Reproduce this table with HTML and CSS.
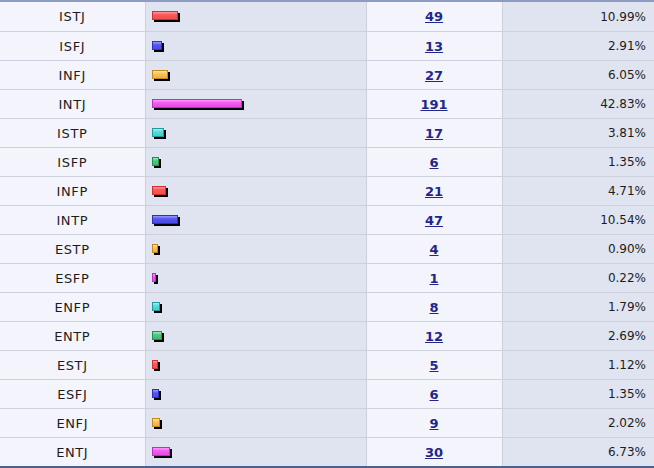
FILE: index.html
```html
<!DOCTYPE html>
<html lang="en">
<head>
  <meta charset="UTF-8">
  <title>MBTI</title>
  <link rel="stylesheet" href="styles.css">
</head>
<body>

<table id="stats">
  <colgroup>
    <col class="c-type">
    <col class="c-graph">
    <col class="c-count">
    <col class="c-pct">
  </colgroup>
  <tr><td class="type">ISTJ</td><td class="graph"><span class="bar red" style="width:26px"></span></td><td class="count"><a href="#">49</a></td><td class="pct">10.99%</td></tr>
  <tr><td class="type">ISFJ</td><td class="graph"><span class="bar blue" style="width:10px"></span></td><td class="count"><a href="#">13</a></td><td class="pct">2.91%</td></tr>
  <tr><td class="type">INFJ</td><td class="graph"><span class="bar orange" style="width:16px"></span></td><td class="count"><a href="#">27</a></td><td class="pct">6.05%</td></tr>
  <tr><td class="type">INTJ</td><td class="graph"><span class="bar pink" style="width:90px"></span></td><td class="count"><a href="#">191</a></td><td class="pct">42.83%</td></tr>
  <tr><td class="type">ISTP</td><td class="graph"><span class="bar cyan" style="width:12px"></span></td><td class="count"><a href="#">17</a></td><td class="pct">3.81%</td></tr>
  <tr><td class="type">ISFP</td><td class="graph"><span class="bar green" style="width:7px"></span></td><td class="count"><a href="#">6</a></td><td class="pct">1.35%</td></tr>
  <tr><td class="type">INFP</td><td class="graph"><span class="bar red" style="width:14px"></span></td><td class="count"><a href="#">21</a></td><td class="pct">4.71%</td></tr>
  <tr><td class="type">INTP</td><td class="graph"><span class="bar blue" style="width:26px"></span></td><td class="count"><a href="#">47</a></td><td class="pct">10.54%</td></tr>
  <tr><td class="type">ESTP</td><td class="graph"><span class="bar orange" style="width:6px"></span></td><td class="count"><a href="#">4</a></td><td class="pct">0.90%</td></tr>
  <tr><td class="type">ESFP</td><td class="graph"><span class="bar pink" style="width:4px"></span></td><td class="count"><a href="#">1</a></td><td class="pct">0.22%</td></tr>
  <tr><td class="type">ENFP</td><td class="graph"><span class="bar cyan" style="width:8px"></span></td><td class="count"><a href="#">8</a></td><td class="pct">1.79%</td></tr>
  <tr><td class="type">ENTP</td><td class="graph"><span class="bar green" style="width:10px"></span></td><td class="count"><a href="#">12</a></td><td class="pct">2.69%</td></tr>
  <tr><td class="type">ESTJ</td><td class="graph"><span class="bar red" style="width:6px"></span></td><td class="count"><a href="#">5</a></td><td class="pct">1.12%</td></tr>
  <tr><td class="type">ESFJ</td><td class="graph"><span class="bar blue" style="width:7px"></span></td><td class="count"><a href="#">6</a></td><td class="pct">1.35%</td></tr>
  <tr><td class="type">ENFJ</td><td class="graph"><span class="bar orange" style="width:8px"></span></td><td class="count"><a href="#">9</a></td><td class="pct">2.02%</td></tr>
  <tr><td class="type">ENTJ</td><td class="graph"><span class="bar pink" style="width:18px"></span></td><td class="count"><a href="#">30</a></td><td class="pct">6.73%</td></tr>
</table>

</body>
</html>
```

FILE: styles.css
```css
body {
  margin: 0;
  background-color: #f4f5fc;
  font-family: "DejaVu Sans", Verdana, sans-serif;
  font-size: 12px;
  color: #1c1c1c;
}

#stats {
  width: 654px;
  table-layout: fixed;
  border-collapse: collapse;
  border-top: 2px solid #8a9cc2;
  border-bottom: 2px solid #4f5f8f;
}

.c-type { width: 145px; }
.c-graph { width: 221px; }
.c-count { width: 136px; }
.c-pct { width: 152px; }

#stats td {
  height: 28px;
  padding: 0;
  border-top: 1px solid #cdd1dd;
  border-left: 1px solid #cdd1dd;
  vertical-align: middle;
}

#stats tr:first-child td {
  border-top: none;
  height: 29px;
}

#stats td:first-child {
  border-left: none;
}

.type {
  text-align: center;
  font-size: 13px;
  letter-spacing: 0.6px;
  background-color: #f4f5fc;
}

.graph {
  padding-left: 6px !important;
  background-color: #e0e4f1;
  line-height: 0;
}

.count {
  text-align: center;
  background-color: #f4f5fc;
}

.count a {
  color: #22268a;
  font-weight: bold;
  font-size: 13px;
}

.pct {
  text-align: right;
  padding-right: 8px !important;
  background-color: #e0e4f1;
}

.bar {
  display: inline-block;
  border: 1px solid;
  box-sizing: border-box;
  box-shadow: 2px 2px 0 #000;
  height: 9px;
  margin-bottom: 2px;
}

.red {
  background: linear-gradient(#ff9a9a, #f55 40%, #f05050);
  border-color: #d03030;
}

.blue {
  background: linear-gradient(#9a9aff, #5555f5 40%, #4a4ae8);
  border-color: #3030c0;
}

.orange {
  background: linear-gradient(#ffe09a, #fbc25a 40%, #f0b040);
  border-color: #c08a20;
}

.pink {
  background: linear-gradient(#ff9aff, #f35af3 40%, #e84ae8);
  border-color: #c030c0;
}

.cyan {
  background: linear-gradient(#a0f0f0, #55dada 40%, #45cccc);
  border-color: #209a9a;
}

.green {
  background: linear-gradient(#9ae8b8, #50c880 40%, #40b870);
  border-color: #209050;
}
```
